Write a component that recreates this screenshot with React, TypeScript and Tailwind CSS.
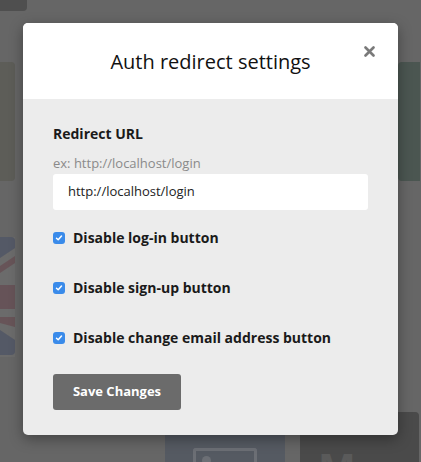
import React from "react";

const font = { fontFamily: '"Open Sans", "Noto Sans", sans-serif' };

function Check() {
  return (
    <span className="flex h-[12px] w-[12px] shrink-0 items-center justify-center rounded-[3px] bg-[#3a8bea]">
      <svg width="8" height="8" viewBox="0 0 8 8">
        <path d="M1.5 4.2 L3.2 5.8 L6.5 2" fill="none" stroke="#fff" strokeWidth="1.5" strokeLinecap="round" strokeLinejoin="round" />
      </svg>
    </span>
  );
}

// dimmed union jack, only its right edge shows behind the modal
function Flag() {
  return (
    <svg width="15" height="120" viewBox="0 0 15 120">
      <rect width="15" height="120" fill="#6b6b6b" />
      <path d="M0 0 H11 Q15 0 15 4 V11 L0 21 Z" fill="#545966" />
      <path d="M15 19 V26 L0 36 V29 Z" fill="#675458" />
      <rect x="0" y="48" width="15" height="24" fill="#665358" />
      <path d="M0 80 H15 V90 L0 86 Z" fill="#675458" />
      <path d="M0 93 L15 103 V114 Q15 118 11 118 H0 Z" fill="#545966" />
    </svg>
  );
}

export default function App() {
  const rows = ["Disable log-in button", "Disable sign-up button", "Disable change email address button"];
  return (
    <div className="relative h-[462px] w-[421px] overflow-hidden bg-[#666666]" style={font}>
      {/* page behind the overlay */}
      <div className="h-[11px] w-[27px] rounded-br-[4px] bg-[#4f4f4f]" />
      <div className="mt-[51px] flex h-[119px] justify-between pr-[1px]">
        <div className="w-[15px] rounded-r-[4px] bg-[#5d5d58]" />
        <div className="w-[22px] rounded-l-[4px] bg-[#4b5651]" />
      </div>
      <div className="mt-[56px] h-[120px] w-[15px]">
        <Flag />
      </div>
      <div className="mt-[55px] flex h-[60px]">
        <div className="ml-[165px] w-[120px] rounded-t-[4px] bg-[#555a62] pl-[28px] pt-[36px]">
          <div className="h-[20px] w-[64px] rounded-t-[3px] border-[3px] border-b-0 border-[#6c6f75] pl-[6px] pt-[5px]">
            <div className="h-[9px] w-[9px] rounded-full bg-[#6c6f75]" />
          </div>
        </div>
        <div className="ml-[15px] w-[119px] overflow-hidden rounded-t-[4px] bg-[#4a4a4a] pl-[18px] pt-[35px] text-[40px] font-bold leading-none text-[#5a5a5a]">
          M
        </div>
      </div>

      {/* modal */}
      <div className="absolute left-[23px] top-[23px] flex h-[412px] w-[375px] flex-col overflow-hidden rounded-[5px] bg-[#ececec] shadow-[0_4px_14px_rgba(0,0,0,0.35)]">
        <div className="relative flex h-[76px] shrink-0 items-center justify-center bg-white">
          <h2 className="pt-[1px] text-[20px] leading-none text-[#111]">Auth redirect settings</h2>
          <button className="absolute right-[23px] top-[23px]">
            <svg width="11" height="11" viewBox="0 0 11 11">
              <path d="M1.5 1.5 L9.5 9.5 M9.5 1.5 L1.5 9.5" stroke="#7a7a7a" strokeWidth="2.6" strokeLinecap="round" />
            </svg>
          </button>
        </div>
        <div className="flex flex-col px-[30px] pt-[26px]">
          <label className="text-[14px] font-bold leading-[18px] text-[#1a1a1a]">Redirect URL</label>
          <span className="mt-[11px] text-[13px] leading-[18px] text-[#8a8a8a]">ex: http://localhost/login</span>
          <div className="mt-[2px] flex h-[36px] w-[315px] items-center rounded-[3px] bg-white pl-[15px] text-[13px] text-[#222]">
            http://localhost/login
          </div>
          <div className="mt-[18px] flex flex-col gap-[31px]">
            {rows.map((r) => (
              <div key={r} className="flex h-[19px] items-center gap-[8px]">
                <Check />
                <span className="text-[14px] font-bold leading-none text-[#1a1a1a]">{r}</span>
              </div>
            ))}
          </div>
          <button className="mt-[27px] flex h-[36px] w-[128px] items-center justify-center rounded-[3px] bg-[#6b6b6b] text-[13px] font-bold text-white">
            Save Changes
          </button>
        </div>
      </div>
    </div>
  );
}
